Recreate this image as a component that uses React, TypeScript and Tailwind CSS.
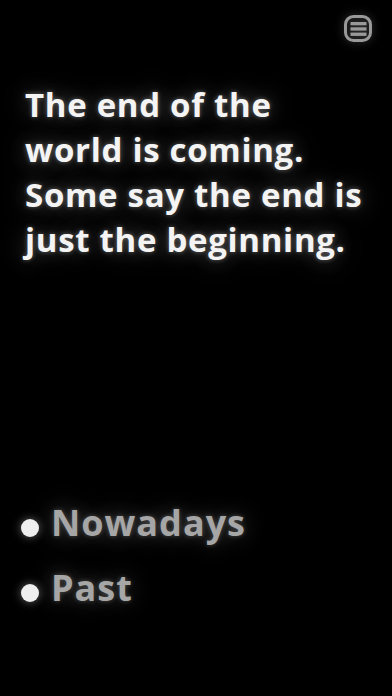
import React from "react";

export default function App() {
  return (
    <div className="w-[392px] h-[696px] bg-black relative overflow-hidden flex flex-col" style={{ fontFamily: '"Open Sans", "Noto Sans", sans-serif' }}>
      <div className="flex justify-end pt-[15px] pr-[20px]">
        <svg width="28" height="27" viewBox="0 0 28 27" className="[filter:drop-shadow(0_0_4px_rgba(255,255,255,0.25))]">
          <rect x="1.5" y="1.5" width="25" height="24" rx="8" fill="none" stroke="#999999" strokeWidth="3" />
          <rect x="6.5" y="7" width="16" height="3.3" fill="#999999" />
          <rect x="6.5" y="12.3" width="16" height="3.3" fill="#999999" />
          <rect x="6.5" y="17.6" width="16" height="3.3" fill="#999999" />
        </svg>
      </div>
      <div className="pl-[25px] pt-[40px] pr-2 text-[#f4f4f4] font-bold text-[33px] leading-[45px] tracking-[0.7px] whitespace-nowrap [text-shadow:0_0_5px_rgba(255,255,255,0.35),0_0_22px_rgba(255,255,255,0.3),0_0_40px_rgba(255,255,255,0.15)]">
        The end of the<br />world is coming.<br />Some say the end is<br />just the beginning.
      </div>
      <div className="flex-1" />
      <div className="pl-[21px] pb-[84px] flex flex-col gap-[17px]">
        <div className="flex items-start gap-[12px]">
          <div className="mt-[19.5px] w-[18px] h-[18px] rounded-full bg-[#eeeeee] [box-shadow:0_0_10px_rgba(255,255,255,0.4)]" />
          <span className="text-[#a6a6a6] font-bold text-[36px] leading-[48px] tracking-[1px] [text-shadow:0_0_5px_rgba(255,255,255,0.25),0_0_22px_rgba(255,255,255,0.25),0_0_40px_rgba(255,255,255,0.12)]">Nowadays</span>
        </div>
        <div className="flex items-start gap-[12px]">
          <div className="mt-[19.5px] w-[18px] h-[18px] rounded-full bg-[#eeeeee] [box-shadow:0_0_10px_rgba(255,255,255,0.4)]" />
          <span className="text-[#a6a6a6] font-bold text-[36px] leading-[48px] tracking-[1px] [text-shadow:0_0_5px_rgba(255,255,255,0.25),0_0_22px_rgba(255,255,255,0.25),0_0_40px_rgba(255,255,255,0.12)]">Past</span>
        </div>
      </div>
    </div>
  );
}
